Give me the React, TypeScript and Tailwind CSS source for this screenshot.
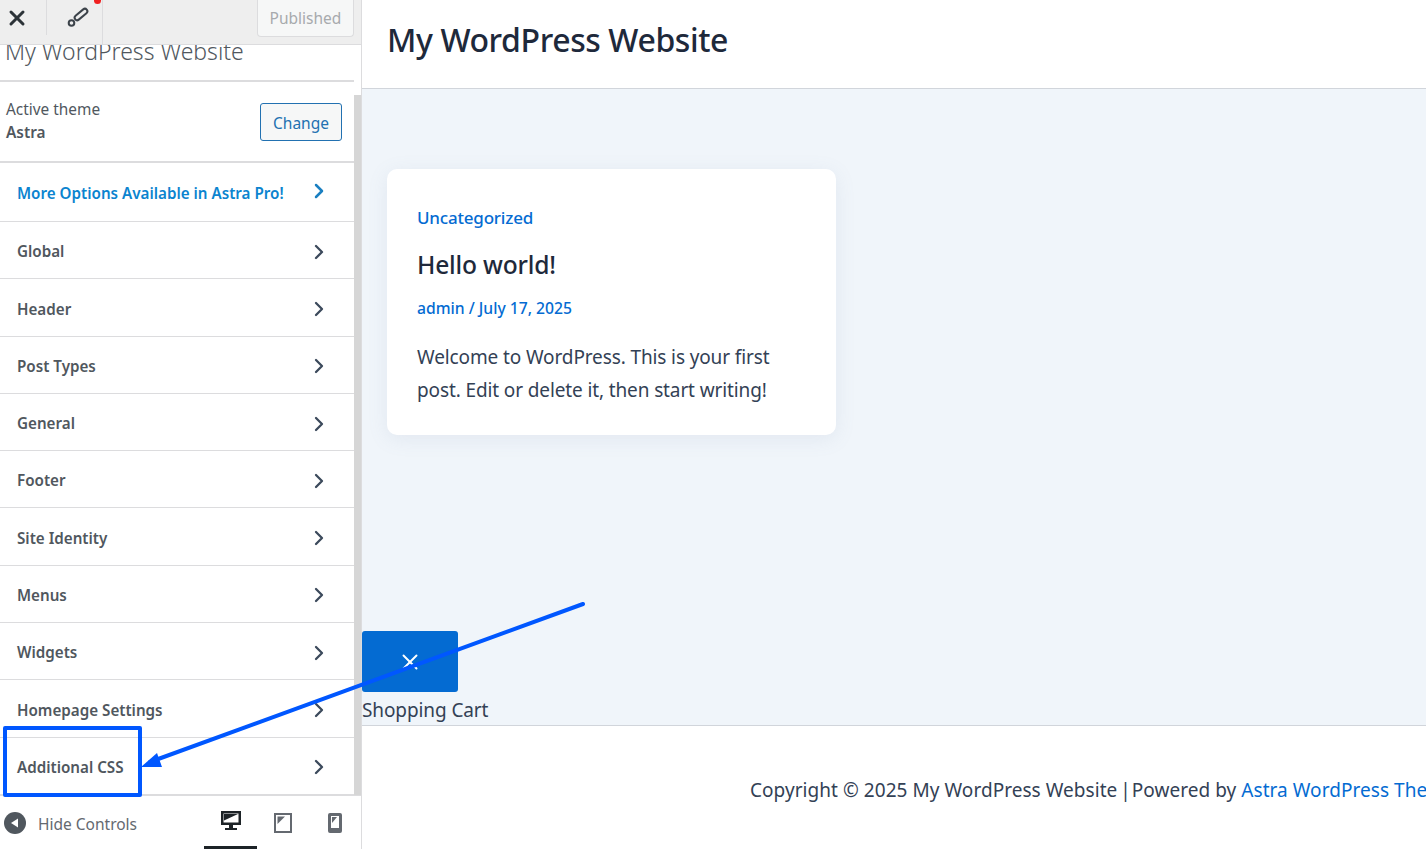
import { ChevronRight, X } from 'lucide-react';

const MENU = [
  'Global',
  'Header',
  'Post Types',
  'General',
  'Footer',
  'Site Identity',
  'Menus',
  'Widgets',
  'Homepage Settings',
  'Additional CSS',
];

function MenuRow({ label }: { label: string }) {
  return (
    <div className="flex h-[57.3px] items-center justify-between border-b border-[#dcdcde] pl-[17px] pr-[23px] pt-[3px] text-[15.2px] font-semibold text-[#50575e]">
      <span>{label}</span>
      <ChevronRight size={24} strokeWidth={2.3} className="text-[#3c4a5c]" />
    </div>
  );
}

export default function App() {
  return (
    <div className="relative flex h-[849px] w-[1426px] overflow-hidden bg-white font-['Noto_Sans',sans-serif]">
      {/* Customizer controls */}
      <aside className="flex w-[362px] shrink-0 flex-col border-r border-[#dcdcde] bg-white">
        <div className="z-10 flex h-[45px] shrink-0 items-start border-b border-[#dcdcde] bg-[#eeeeee]">
          <div className="flex h-[35px] w-[47px] items-center border-r border-[#dcdcde] pl-[5px] text-[#2c3338]">
            <X size={24} strokeWidth={3} />
          </div>
          <div className="relative flex h-[44px] w-[56px] items-center justify-center border-r border-[#dcdcde] pb-[8px] pl-[6px] text-[#3c434a]">
            <svg width="24" height="24" viewBox="0 0 24 24" fill="none" stroke="currentColor" strokeWidth="2">
              <rect x="7.5" y="6" width="15" height="5" rx="2.5" transform="rotate(-40 15 8.5)" />
              <circle cx="5.5" cy="17" r="2.8" />
            </svg>
            <span className="absolute right-[1px] top-[-3px] h-[7px] w-[7px] rounded-full bg-[#f02020]" />
          </div>
          <div className="ml-auto mr-[7px] flex h-[37px] w-[97px] items-center justify-center rounded-b border border-t-0 border-[#dcdcde] bg-[#f6f7f7] pt-[2px] text-[15.5px] text-[#a7aaad]">
            Published
          </div>
        </div>

        <div className="relative flex flex-1 overflow-hidden">
          <div className="flex-1 overflow-hidden">
            <div className="flex h-[37px] items-end overflow-hidden border-b-2 border-[#dcdcde] pb-[14px] pl-[5px]">
              <span className="whitespace-nowrap text-[23px] font-light leading-[30px] text-[#50575e]">
                My WordPress Website
              </span>
            </div>
            <div className="flex h-[81px] items-center justify-between border-b-2 border-[#dcdcde] pl-[6px] pr-[12px]">
              <div className="pb-[2px] text-[15.4px] leading-[23px] text-[#50575e]">
                <div>Active theme</div>
                <div className="font-semibold">Astra</div>
              </div>
              <div className="flex h-[38px] w-[82px] items-center justify-center rounded-[3px] border border-[#2271b1] bg-[#f6f7f7] pt-[4px] text-[15.5px] text-[#2271b1]">
                Change
              </div>
            </div>
            <div className="flex h-[59px] items-center justify-between border-b border-[#dcdcde] pl-[17px] pr-[23px] pt-[3px] text-[15.2px] font-semibold text-[#0b84cf]">
              <span>More Options Available in Astra Pro!</span>
              <ChevronRight size={24} strokeWidth={2.5} className="mb-[6px] text-[#1a7fc1]" />
            </div>
            {MENU.map((label) => (
              <MenuRow key={label} label={label} />
            ))}
          </div>
          <div className="mt-[50px] w-[7px] shrink-0 bg-[#d6d6d6]" />
        </div>

        <div className="flex h-[54px] shrink-0 items-center border-t border-[#dcdcde] pl-[4px]">
          <span className="flex h-[22px] w-[22px] items-center justify-center rounded-full bg-[#50575e]">
            <svg width="12" height="12" viewBox="0 0 12 12" fill="white">
              <path d="M2 6 L9 1.5 V10.5 Z" />
            </svg>
          </span>
          <span className="ml-[12px] pt-[4px] text-[15.5px] text-[#646970]">Hide Controls</span>
          <div className="ml-auto flex h-full items-center">
            <div className="flex h-full w-[53px] items-center justify-center border-b-[3px] border-[#1d2327]">
              <svg width="22" height="22" viewBox="0 0 22 22" fill="#1d2327">
                <path d="M1 1 H21 V15 H13 V18 H17 V20 H5 V18 H9 V15 H1 Z M3.5 3.5 V12.5 H18.5 V3.5 Z" fillRule="evenodd" />
                <path d="M4 4 H18 L4 10.5 Z" />
              </svg>
            </div>
            <div className="flex w-[52px] items-center justify-center">
              <svg width="18" height="20" viewBox="0 0 18 20" fill="#646970">
                <path d="M0 0 H18 V20 H0 Z M2 2 V18 H16 V2 Z" fillRule="evenodd" />
                <path d="M3.5 3.5 H11 L3.5 11 Z" />
              </svg>
            </div>
            <div className="flex w-[52px] items-center justify-center">
              <svg width="14" height="20" viewBox="0 0 14 20" fill="#646970">
                <path d="M2 0 H12 Q14 0 14 2 V18 Q14 20 12 20 H2 Q0 20 0 18 V2 Q0 0 2 0 Z M3 3 V15 H11 V3 Z" fillRule="evenodd" />
                <path d="M4 4 H9 L4 10 Z" />
              </svg>
            </div>
          </div>
        </div>
      </aside>

      {/* Site preview */}
      <main className="flex min-w-0 flex-1 flex-col">
        <header className="flex h-[89px] shrink-0 items-center border-b border-[#d1d5db] pb-[8px] pl-[25px]">
          <h1 className="text-[32px] font-medium tracking-[-0.4px] text-[#1e293b]">My WordPress Website</h1>
        </header>
        <div className="flex flex-1 flex-col bg-[#f0f5fa]">
          <article className="ml-[25px] mt-[80px] h-[266px] w-[449px] rounded-[10px] bg-white pl-[30px] pt-[36px] shadow-[0_4px_20px_rgba(120,140,170,0.12)]">
            <div className="text-[17px] font-medium leading-[26px] tracking-[-0.2px] text-[#046bd2]">Uncategorized</div>
            <h2 className="mt-[17px] text-[24.6px] font-medium leading-[34px] tracking-[-0.2px] text-[#1e293b]">Hello world!</h2>
            <div className="mt-[14px] text-[15.7px] font-medium leading-[24px] text-[#046bd2]">admin / July 17, 2025</div>
            <p className="mt-[21px] w-[385px] text-[19px] leading-[33px] tracking-[-0.12px] text-[#334155]">
              Welcome to WordPress. This is your first post. Edit or delete it, then start writing!
            </p>
          </article>
          <div className="mt-auto">
            <div className="flex h-[61px] w-[96px] items-center justify-center rounded-[3px] bg-[#046bd2] text-white">
              <X size={26} strokeWidth={1.8} />
            </div>
            <div className="mt-[4px] h-[29px] text-[19px] leading-[28px] tracking-[-0.1px] text-[#334155]">Shopping Cart</div>
          </div>
        </div>
        <footer className="flex h-[124px] shrink-0 items-center overflow-hidden whitespace-nowrap border-t border-[#d1d5db] pl-[388px] pt-[6px] text-[19px] tracking-[0.05px] text-[#334155]">
          <span>
            Copyright © 2025 My WordPress Website<span className="tracking-[-2px]"> | </span>Powered by <span className="text-[#046bd2]">Astra WordPress Theme</span>
          </span>
        </footer>
      </main>

      {/* Annotation drawn over the screenshot */}
      <div className="absolute left-[3px] top-[726px] h-[71px] w-[139px] rounded-[2px] border-4 border-[#0057ff]" />
      <svg className="pointer-events-none absolute left-0 top-0" width="1426" height="849" fill="none">
        <path d="M583 604 L150 762" stroke="#0057ff" strokeWidth="4" strokeLinecap="round" />
        <path d="M141 767 L157 753 L162 767 Z" fill="#0057ff" />
      </svg>
    </div>
  );
}
